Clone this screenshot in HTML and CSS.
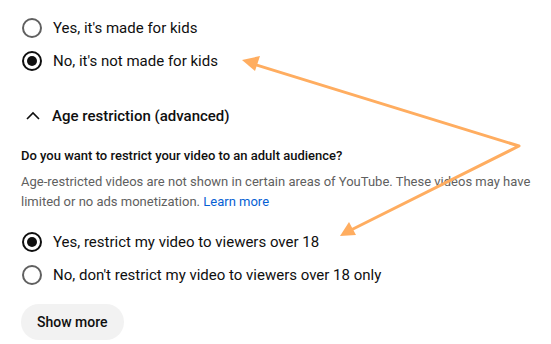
FILE: index.html
```html
<!DOCTYPE html>
<html lang="en">
<head>
  <meta charset="UTF-8" />
  <title>Audience</title>
  <link rel="stylesheet" href="styles.css">
</head>
<body>
  <div class="panel">
    <div class="options">
      <label class="option"><span class="radio"></span>Yes, it's made for kids</label>
      <label class="option"><span class="radio checked"></span>No, it's not made for kids</label>
    </div>

    <div class="toggle">
      <svg class="chevron" viewBox="0 0 24 24" width="24" height="24"><path d="M6 15l6-6 6 6" fill="none" stroke="#0f0f0f" stroke-width="1.6"/></svg>
      <span>Age restriction (advanced)</span>
    </div>

    <h3>Do you want to restrict your video to an adult audience?</h3>
    <p class="desc">Age-restricted videos are not shown in certain areas of YouTube. These videos may have limited or no ads monetization. <a href="#">Learn more</a></p>

    <div class="options">
      <label class="option"><span class="radio checked"></span>Yes, restrict my video to viewers over 18</label>
      <label class="option"><span class="radio"></span>No, don't restrict my video to viewers over 18 only</label>
    </div>

    <button>Show more</button>
  </div>

  <svg class="arrows" width="551" height="344" viewBox="0 0 551 344">
    <g fill="none" stroke="#ffad60" stroke-width="3" stroke-linecap="round" stroke-linejoin="round">
      <path d="M250 63 L519 146 L347 232"/>
    </g>
    <g fill="#ffad60">
      <polygon points="242,60 260,56 255,71"/>
      <polygon points="340,236 349,222 356,235"/>
    </g>
  </svg>
</body>
</html>
```

FILE: styles.css
```css
* {
  box-sizing: border-box;
  margin: 0;
  padding: 0;
}
body {
  font-family: Roboto, 'Liberation Sans', sans-serif;
  background: #fff;
  color: #0f0f0f;
  width: 551px;
  height: 344px;
  overflow: hidden;
  position: relative;
}
.panel {
  padding: 18px 0 0 22px;
}
.options {
  display: flex;
  flex-direction: column;
  gap: 13px;
}
.option {
  display: flex;
  align-items: center;
  gap: 11px;
  font-size: 15px;
  height: 20px;
}
.radio {
  width: 20px;
  height: 20px;
  border: 2px solid #606060;
  border-radius: 50%;
  display: flex;
  align-items: center;
  justify-content: center;
  flex-shrink: 0;
}
.radio.checked {
  border-color: #0f0f0f;
}
.radio.checked::after {
  content: "";
  width: 10px;
  height: 10px;
  border-radius: 50%;
  background: #0f0f0f;
}
.toggle {
  display: flex;
  align-items: center;
  gap: 7px;
  margin-top: 33px;
  margin-left: -1px;
  font-size: 15px;
  font-weight: 500;
  height: 24px;
}
.chevron {
  width: 24px;
  height: 24px;
}
h3 {
  font-size: 13px;
  font-weight: 500;
  margin-top: 19px;
  margin-left: -1px;
  line-height: 18px;
}
.desc {
  font-size: 13px;
  color: #606060;
  line-height: 20px;
  margin-top: 7px;
  margin-left: -1px;
  max-width: 515px;
}
.desc a {
  color: #065fd4;
  text-decoration: none;
}
.desc + .options {
  margin-top: 20px;
}
button {
  margin-top: 19px;
  margin-left: -1px;
  height: 36px;
  padding: 0 16px;
  border: none;
  border-radius: 18px;
  background: #f2f2f2;
  color: #0f0f0f;
  font-family: inherit;
  font-size: 14px;
  font-weight: 500;
}
.arrows {
  position: absolute;
  left: 0;
  top: 0;
}
```
